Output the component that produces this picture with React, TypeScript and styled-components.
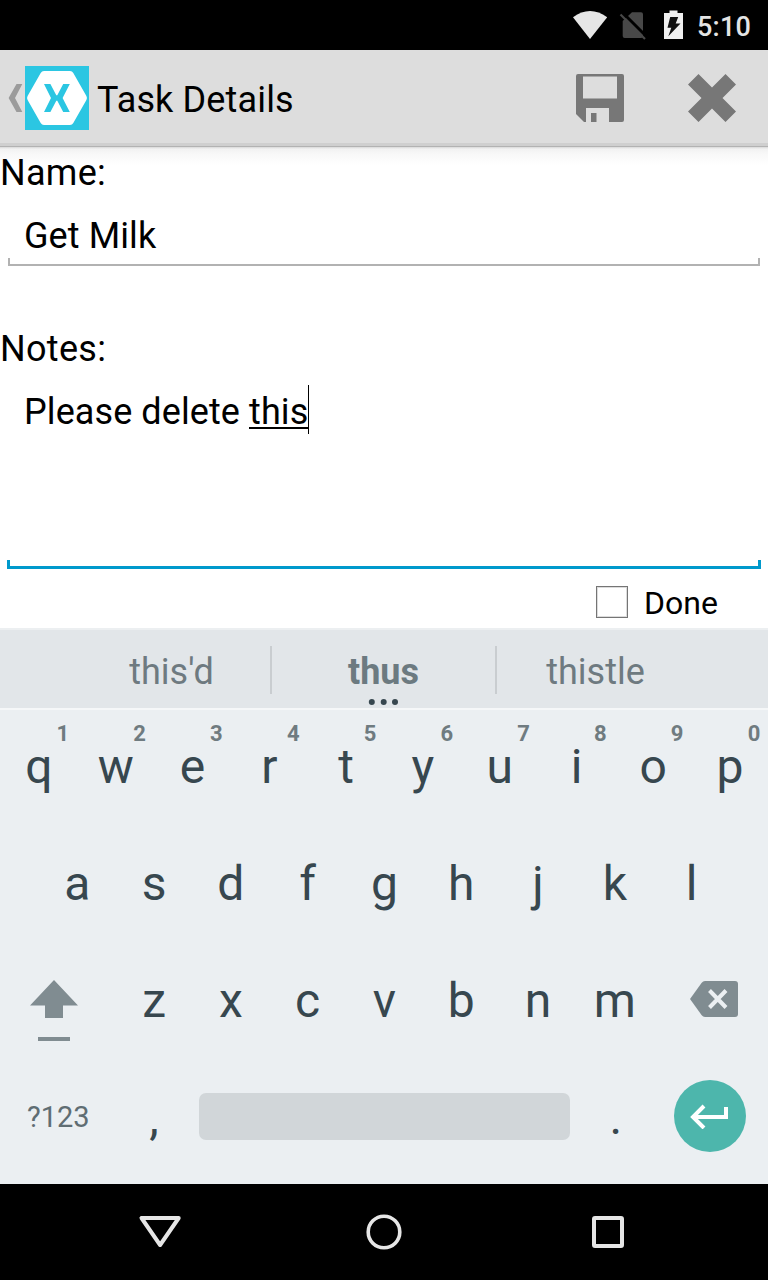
import React from "react";
import styled, { createGlobalStyle } from "styled-components";

const GlobalStyle = createGlobalStyle`
  * { box-sizing: border-box; }
  body { margin: 0; background: #fff; font-family: Roboto, "Liberation Sans", sans-serif; }
  svg { display: block; flex: none; }
`;

const Screen = styled.div`
  width: 768px;
  height: 1280px;
  display: flex;
  flex-direction: column;
  overflow: hidden;
  background: #fff;
  color: #000;
`;

const StatusBar = styled.header`
  height: 50px;
  flex: none;
  display: flex;
  justify-content: flex-end;
  align-items: center;
  padding-right: 17px;
  background: #000;
`;

const Clock = styled.span`
  margin-left: 14px;
  padding-top: 3px;
  font-size: 27px;
  line-height: 32px;
  font-weight: 500;
  letter-spacing: 0.2px;
  color: #e4e4e4;
`;

const ActionBar = styled.div`
  height: 97px;
  flex: none;
  display: flex;
  align-items: flex-start;
  padding: 16px 24px 0 8px;
  background: linear-gradient(#dddddd 93px, #cfcfcf 93px, #cfcfcf 96px, #b2b2b2 96px);
`;

const BackButton = styled.div`
  display: flex;
  align-items: center;
  gap: 2px;
  height: 64px;
`;

const Title = styled.h1`
  flex: 1;
  margin: 0 0 0 8px;
  font-size: 36px;
  line-height: 68px;
  font-weight: 400;
  letter-spacing: 0.15px;
`;

const Actions = styled.div`
  display: flex;
  gap: 64px;
  padding: 8px 8px 0 0;
`;

const Form = styled.main`
  flex: none;
  height: 481px;
  background: linear-gradient(#d9d9d9, #f2f2f2 2px, #f8f8f8 7px, #fff 18px);
`;

const Label = styled.div<{ $gap?: number }>`
  height: 52px;
  margin-top: ${(p) => p.$gap ?? 0}px;
  font-size: 36px;
  line-height: 52px;
  letter-spacing: 0.3px;
`;

const Field = styled.div<{ $height: number; $focused?: boolean }>`
  display: flex;
  flex-direction: column;
  justify-content: space-between;
  height: ${(p) => p.$height}px;
  margin: 0 ${(p) => (p.$focused ? 7 : 8)}px;
`;

const FieldText = styled.div<{ $indent: number }>`
  display: flex;
  align-items: flex-start;
  height: 59px;
  padding: 15px 0 0 ${(p) => p.$indent}px;
  font-size: 36px;
  line-height: 44px;
  letter-spacing: 0.09px;
  white-space: pre;
`;

const Composing = styled.span`
  height: 39px;
  border-bottom: 2px solid #000;
`;

const Caret = styled.span`
  width: 1px;
  height: 49px;
  margin-top: -5px;
  background: #000;
`;

const Underline = styled.div<{ $focused?: boolean }>`
  flex: none;
  height: ${(p) => (p.$focused ? 9 : 8)}px;
  border: ${(p) => (p.$focused ? "3px solid #0099cc" : "2px solid #b2b2b2")};
  border-top: 0;
`;

const DoneRow = styled.label`
  display: flex;
  align-items: center;
  gap: 16px;
  height: 59px;
  padding: 8px 0 0 596px;
  font-size: 32px;
  line-height: 38px;
`;

const CheckBox = styled.span`
  width: 32px;
  height: 32px;
  margin-top: -2px;
  border: 1px solid #757575;
  box-shadow: inset 0 0 0 1px #dcdcdc;
`;

const Suggestions = styled.div`
  display: flex;
  align-items: center;
  flex: none;
  height: 82px;
  background: #e2e6e9;
  border-top: 2px solid #eceff1;
  border-bottom: 2px solid #f5f7f8;
`;

const Suggestion = styled.div<{ $width: number; $strong?: boolean; $left?: number }>`
  position: relative;
  width: ${(p) => p.$width}px;
  padding-left: ${(p) => p.$left ?? 0}px;
  padding-top: 6px;
  font-size: 36px;
  line-height: 42px;
  text-align: center;
  font-weight: ${(p) => (p.$strong ? 700 : 400)};
  color: ${(p) => (p.$strong ? "#6c7a80" : "#6e7a80")};
`;

const MoreDots = styled.svg`
  position: absolute;
  left: 96px;
  top: 53px;
`;

const Divider = styled.span`
  width: 2px;
  height: 48px;
  margin-top: 2px;
  background: #c9cdd0;
`;

const Keyboard = styled.div`
  flex: none;
  height: 474px;
  background: #ebeff2;
`;

const KeyRow = styled.div<{ $inset?: number }>`
  display: flex;
  height: 117px;
  padding: 0 ${(p) => p.$inset ?? 0}px;
`;

const KeyCap = styled.div`
  position: relative;
  width: 76.8px;
  padding: 28px 0 0 1px;
  font-size: 48px;
  line-height: 57px;
  text-align: center;
  color: #37474f;
`;

const Hint = styled.span`
  position: absolute;
  top: 11px;
  right: 0;
  width: 28px;
  font-size: 22px;
  line-height: 26px;
  font-weight: 700;
  text-align: center;
  color: #6f7b80;
`;

const SideKey = styled.div<{ $top: number; $left: number }>`
  width: 115.2px;
  padding: ${(p) => p.$top}px 0 0 ${(p) => p.$left}px;
`;

const SymbolsKey = styled.div`
  width: 115.2px;
  padding: 39px 0 0 27px;
  font-size: 29px;
  line-height: 34px;
  color: #5f6d73;
`;

const SpaceBar = styled.div`
  width: 371px;
  height: 47px;
  margin: 32px 7px 0;
  border-radius: 7px;
  background: #d1d6d9;
`;

const EnterKey = styled.div`
  display: grid;
  place-items: center;
  width: 72px;
  height: 72px;
  margin: 19px 0 0 20px;
  border-radius: 50%;
  background: #4db6ac;
`;

const NavBar = styled.nav`
  display: flex;
  flex: none;
  align-items: center;
  justify-content: space-between;
  height: 96px;
  padding: 0 138px;
  background: #000;
`;

const TOP_KEYS = "qwertyuiop".split("");

export default function App() {
  return (
    <Screen>
      <GlobalStyle />
      <StatusBar>
        <svg width="112" height="50" viewBox="571 0 112 50">
          <path d="M573 17.2Q590 4.800 607.200 17.2L590 39Z" fill="#e6e6e6" />
          <path d="M632 12.300h9q2 0 2 2v21.700q0 2-2 2h-16.300q-2 0-2-2V21z" fill="#484848" />
          <path d="M622 12L648 38" stroke="#000" strokeWidth="3" />
          <path d="M620.500 14.500L645 39" stroke="#484848" strokeWidth="2.200" />
          <path d="M669.500 10.500h8V13h5.500v26h-19V13h5.500z" fill="#f0f0f0" />
          <path d="M670.200 17h8l-2.500 6.500h4.800L668.300 36.300l3-8.500H667.500z" fill="#111" />
        </svg>
        <Clock>5:10</Clock>
      </StatusBar>

      <ActionBar>
        <BackButton>
          <svg width="15" height="64" viewBox="8 66 15 64">
            <path d="M16.500 84H22.300L15 98L22.300 112H16.500L8.600 98Z" fill="#9b9b9b" />
          </svg>
          <svg width="64" height="64" viewBox="0 0 64 64">
            <path d="M0 0h64v64H0z" fill="#2bc6e2" />
            <path d="M19 5H45Q47.200 5 48.300 7L61.400 30Q62.500 32 61.400 34L48.300 57Q47.200 59 45 59H19Q16.800 59 15.700 57L2.600 34Q1.500 32 2.600 30L15.700 7Q16.800 5 19 5Z" fill="#fff" />
            <path d="M19 18H25.400L31.300 29.300H32.300L38.200 18H44.800L37.600 32L44.800 46H38.200L32.300 34.700H31.300L25.400 46H19L26 32Z" fill="#2bc6e2" />
          </svg>
        </BackButton>
        <Title>Task Details</Title>
        <Actions>
          <svg width="48" height="48" viewBox="0 0 48 48">
            <path fillRule="evenodd" fill="#777" d="M2 0H46Q48 0 48 2V46Q48 48 46 48H33V34H10V48H8L0 40V2Q0 0 2 0ZM7 2.500V24.500H41V2.500Z" />
            <path d="M15 39h5.500v9H15z" fill="#777" />
          </svg>
          <svg width="48" height="48" viewBox="0 0 48 48">
            <path d="M10.500 0L24 13.500 37.500 0 48 10.500 34.500 24 48 37.500 37.500 48 24 34.500 10.500 48 0 37.500 13.500 24 0 10.500Z" fill="#777" />
          </svg>
        </Actions>
      </ActionBar>

      <Form>
        <Label>Name:</Label>
        <Field $height={67}>
          <FieldText $indent={16}>Get Milk</FieldText>
          <Underline />
        </Field>
        <Label $gap={57}>Notes:</Label>
        <Field $height={194} $focused>
          <FieldText $indent={17}>
            {"Please delete "}
            <Composing>this</Composing>
            <Caret />
          </FieldText>
          <Underline $focused />
        </Field>
        <DoneRow>
          <CheckBox />
          Done
        </DoneRow>
      </Form>

      <Suggestions>
        <Suggestion $width={270} $left={73}>this'd</Suggestion>
        <Divider />
        <Suggestion $width={223} $strong>
          thus
          <MoreDots width="32" height="8" viewBox="0 0 32 8">
            <circle cx="3.800" cy="4" r="3" fill="#37474f" />
            <circle cx="15.700" cy="4" r="3" fill="#37474f" />
            <circle cx="27" cy="4" r="3" fill="#37474f" />
          </MoreDots>
        </Suggestion>
        <Divider />
        <Suggestion $width={197}>thistle</Suggestion>
      </Suggestions>

      <Keyboard>
        <KeyRow>
          {TOP_KEYS.map((key, i) => (
            <KeyCap key={key}>
              {key}
              <Hint>{(i + 1) % 10}</Hint>
            </KeyCap>
          ))}
        </KeyRow>
        <KeyRow $inset={38.4}>
          {"asdfghjkl".split("").map((key) => (
            <KeyCap key={key}>{key}</KeyCap>
          ))}
        </KeyRow>
        <KeyRow>
          <SideKey $top={36} $left={30}>
            <svg width="48" height="62" viewBox="30 980 48 62">
              <path d="M54 980L78 1005.500H63V1018H45V1005.500H30Z" fill="#808c91" />
              <path d="M38 1037h32v4H38z" fill="#808c91" />
            </svg>
          </SideKey>
          {"zxcvbnm".split("").map((key) => (
            <KeyCap key={key}>{key}</KeyCap>
          ))}
          <SideKey $top={36} $left={37}>
            <svg width="48" height="38" viewBox="690 980 48 38">
              <path d="M705 981H735Q738 981 738 984V1014Q738 1017 735 1017H705Q703 1017 701.500 1015L690 999 701.500 983Q703 981 705 981Z" fill="#808c91" />
              <path d="M709.500 990.500L726 1007.500M726 990.500L709.500 1007.500" stroke="#ebeff2" strokeWidth="4" />
            </svg>
          </SideKey>
        </KeyRow>
        <KeyRow>
          <SymbolsKey>?123</SymbolsKey>
          <KeyCap>,</KeyCap>
          <SpaceBar />
          <KeyCap>.</KeyCap>
          <EnterKey>
            <svg width="40" height="26" viewBox="690 1104 40 26">
              <path d="M726 1108V1118H693M704 1107L693 1118L704 1129" fill="none" stroke="#fff" strokeWidth="4" />
            </svg>
          </EnterKey>
        </KeyRow>
      </Keyboard>

      <NavBar>
        <svg width="44" height="40" viewBox="138 1212 44 40">
          <path d="M141.500 1218H178.700L160.100 1245Z" fill="none" stroke="#e6e6e6" strokeWidth="4" strokeLinejoin="round" />
        </svg>
        <svg width="44" height="40" viewBox="0 0 44 40">
          <circle cx="22" cy="20" r="15.800" fill="none" stroke="#e6e6e6" strokeWidth="3.600" />
        </svg>
        <svg width="44" height="40" viewBox="586 1212 44 40">
          <rect x="594" y="1218" width="28" height="28" rx="1" fill="none" stroke="#e6e6e6" strokeWidth="4" />
        </svg>
      </NavBar>
    </Screen>
  );
}
